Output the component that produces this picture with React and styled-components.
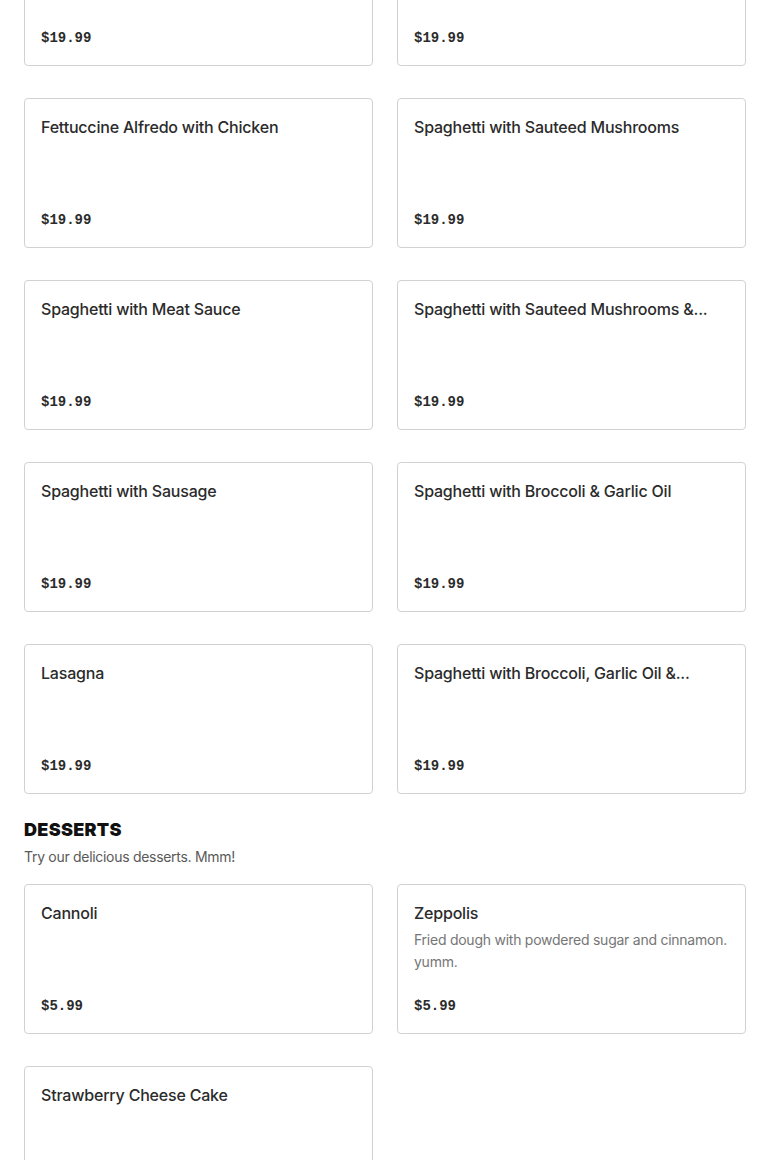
import styled, { createGlobalStyle } from "styled-components"

const Global = createGlobalStyle`
  body {
    margin: 0;
    background: #fff;
    font-family: Inter, "Noto Sans", sans-serif;
    color: #2d2d2d;
  }
`

const Page = styled.div`
  padding: 0 24px;
  margin-top: -84px; // page is scrolled a bit
`
const Section = styled.section`
  & + & {
    margin-top: 24px;
  }
`
const Heading = styled.h2`
  margin: 0;
  font-size: 18px;
  line-height: 24px;
  font-weight: 900;
  letter-spacing: 0.3px;
  color: #111;
`
const Subtitle = styled.p`
  margin: 4px 0 16px;
  font-size: 14px;
  line-height: 22px;
  letter-spacing: -0.3px;
  color: #595959;
`
const Grid = styled.div`
  display: grid;
  grid-template-columns: 1fr 1fr;
  column-gap: 24px;
  row-gap: 32px;
`
const Card = styled.div`
  display: flex;
  flex-direction: column;
  min-height: 150px;
  box-sizing: border-box;
  padding: 16px;
  border: 1px solid #d2d2d2;
  border-radius: 4px;
  background: #fff;
`
const Title = styled.div`
  font-size: 16px;
  line-height: 24px;
  font-weight: 500;
  letter-spacing: -0.2px;
  color: #2b2b2b;
  white-space: nowrap;
  overflow: hidden;
  text-overflow: ellipsis;
`
const Desc = styled.div`
  margin-top: 4px;
  font-size: 14px;
  line-height: 22px;
  letter-spacing: -0.25px;
  color: #767676;
`
const Price = styled.div`
  margin-top: auto;
  font-family: "Liberation Mono", "DejaVu Sans Mono", monospace;
  font-weight: 700;
  font-size: 14px;
  line-height: 22px;
  color: #2b2b2b;
`

const pasta = [
  "Baked Ziti",
  "Penne alla Vodka",
  "Fettuccine Alfredo with Chicken",
  "Spaghetti with Sauteed Mushrooms",
  "Spaghetti with Meat Sauce",
  "Spaghetti with Sauteed Mushrooms &...",
  "Spaghetti with Sausage",
  "Spaghetti with Broccoli & Garlic Oil",
  "Lasagna",
  "Spaghetti with Broccoli, Garlic Oil &...",
].map(name => ({ name, price: "$19.99" }))

const desserts = [
  { name: "Cannoli", price: "$5.99" },
  { name: "Zeppolis", desc: "Fried dough with powdered sugar and cinnamon. yumm.", price: "$5.99" },
  { name: "Strawberry Cheese Cake", price: "$5.99" },
]

function Item({ item }) {
  return (
    <Card>
      <Title>{item.name}</Title>
      {item.desc && <Desc>{item.desc}</Desc>}
      <Price>{item.price}</Price>
    </Card>
  )
}

function App() {
  return (
    <>
      <Global />
      <Page>
        <Section>
          <Grid>
            {pasta.map(p => <Item key={p.name} item={p} />)}
          </Grid>
        </Section>
        <Section>
          <Heading>DESSERTS</Heading>
          <Subtitle>Try our delicious desserts. Mmm!</Subtitle>
          <Grid>
            {desserts.map(d => <Item key={d.name} item={d} />)}
          </Grid>
        </Section>
      </Page>
    </>
  )
}

export default App
